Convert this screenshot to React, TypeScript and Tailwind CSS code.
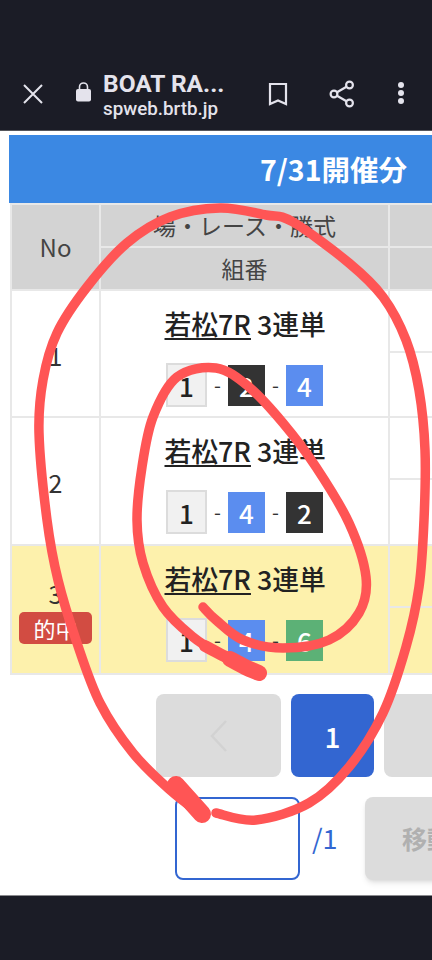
const jp = "font-['Noto_Sans_CJK_JP','Noto_Sans',sans-serif]";

// hand traced pen strokes, turned into a smooth curve
function smooth(pts: number[][]) {
  let d = `M${pts[0][0]} ${pts[0][1]}`;
  for (let i = 0; i < pts.length - 1; i++) {
    const p0 = pts[i - 1] || pts[i];
    const p1 = pts[i];
    const p2 = pts[i + 1];
    const p3 = pts[i + 2] || p2;
    const c1x = p1[0] + (p2[0] - p0[0]) / 6;
    const c1y = p1[1] + (p2[1] - p0[1]) / 6;
    const c2x = p2[0] - (p3[0] - p1[0]) / 6;
    const c2y = p2[1] - (p3[1] - p1[1]) / 6;
    d += ` C${c1x} ${c1y} ${c2x} ${c2y} ${p2[0]} ${p2[1]}`;
  }
  return d;
}

const outer = [
  [202, 815], [170, 790], [133, 753], [100, 703], [77, 643], [58, 580], [47, 520], [39, 433], [43, 380], [57, 333],
  [87, 287], [127, 243], [170, 217], [220, 208], [266, 215], [293, 222], [349, 263], [383, 297], [406, 340], [419, 390],
  [425, 450], [424, 520], [419, 587], [406, 647], [383, 713], [349, 767], [309, 803], [256, 820], [216, 813],
];
const inner = [
  [203, 607], [216, 620], [243, 640], [283, 648], [329, 640], [359, 613], [366, 577], [349, 523], [316, 467], [283, 423],
  [249, 387], [216, 368], [177, 377], [153, 417], [142, 467], [137, 520], [143, 563], [163, 607], [193, 637], [220, 654], [259, 673],
];

function Box({ n }: { n: number }) {
  if (n === 1) {
    return (
      <span className="flex h-[44px] w-[41px] items-center justify-center border-2 border-[#dcdcdc] bg-[#f1f1f1] text-[26px] font-medium text-[#222]">
        1
      </span>
    );
  }
  const bg = n === 2 ? "bg-[#333333]" : n === 4 ? "bg-[#5b8def]" : "bg-[#5cb176]";
  return (
    <span className={`flex h-[41px] w-[37px] items-center justify-center text-[26px] font-medium text-white ${bg}`}>
      {n}
    </span>
  );
}

function Row({ no, combo, hit, h }: { no: number; combo: number[]; hit?: boolean; h: string }) {
  const bg = hit ? "bg-[#fdf1ac]" : "bg-white";
  return (
    <div className={`flex border-b-2 border-[#e8e8e8] ${h} ${bg}`}>
      <div
        className={`flex w-[89px] shrink-0 flex-col items-center justify-center border-r-2 border-[#e8e8e8] text-[25px] leading-[38px] text-[#333] ${
          hit ? "pb-[2px]" : "pt-[2px]"
        }`}
      >
        {no}
        {hit && (
          <span className="w-[73px] rounded-[5px] bg-[#d24c42] text-center text-[22px] leading-[32px] text-white">
            的中
          </span>
        )}
      </div>
      <div className="flex w-[289px] shrink-0 flex-col items-center border-r-2 border-[#e8e8e8] pt-[13px]">
        <p className="w-[160px] whitespace-nowrap text-[26.8px] leading-[40px] font-medium text-[#222]">
          <span className="underline underline-offset-[3px]">若松7R</span> 3連単
        </p>
        <div className="mt-[19px] flex w-[157px] items-center justify-between text-[20px] text-[#333]">
          <Box n={combo[0]} />
          <span>-</span>
          <Box n={combo[1]} />
          <span>-</span>
          <Box n={combo[2]} />
        </div>
      </div>
      <div className="flex-1">
        <div className="h-[62px] border-b-2 border-[#e8e8e8]" />
      </div>
    </div>
  );
}

export default function App() {
  return (
    <div className={`relative flex h-[960px] w-[432px] flex-col overflow-hidden bg-white ${jp}`}>
      <header className="flex h-[131px] shrink-0 items-end border-b border-[#55565c] bg-[#1b1c26] pb-[9px] font-['Roboto',sans-serif] text-[#e4e3ec]">
        <svg className="mb-[17px] ml-[23px] h-[20px] w-[20px]" viewBox="0 0 20 20" fill="none" stroke="currentColor" strokeWidth="2">
          <path d="M1 1l18 18M19 1L1 19" />
        </svg>
        <svg className="mb-[19px] ml-[33px] h-[20px] w-[15px]" viewBox="0 0 15 20" fill="currentColor">
          <path d="M3.5 8V5a4 4 0 0 1 8 0v3" fill="none" stroke="currentColor" strokeWidth="1.6" />
          <rect y="7" width="15" height="12.5" rx="2" />
        </svg>
        <div className="ml-[12px] w-[150px]">
          <p className="text-[24.5px] leading-[27px] font-bold">BOAT RA...</p>
          <p className="text-[18.8px] leading-[24px] font-medium">spweb.brtb.jp</p>
        </div>
        <svg className="mb-[15px] ml-[15px] h-[24px] w-[20px]" viewBox="0 0 20 24" fill="none" stroke="currentColor" strokeWidth="2.2">
          <path d="M2 2h16v20l-8-3.5L2 22z" />
        </svg>
        <svg className="mb-[13px] ml-[41px] h-[28px] w-[26px]" viewBox="0 0 26 28" fill="none" stroke="currentColor" strokeWidth="2.2">
          <circle cx="20.5" cy="5" r="3.4" />
          <circle cx="5" cy="14" r="3.4" />
          <circle cx="20.5" cy="23" r="3.4" />
          <path d="M8 12.3l9.5-5.6M8 15.7l9.5 5.6" />
        </svg>
        <svg className="mb-[16px] ml-[43px] h-[24px] w-[6px]" viewBox="0 0 6 24" fill="currentColor">
          <circle cx="3" cy="4" r="3" />
          <circle cx="3" cy="12" r="3" />
          <circle cx="3" cy="20" r="3" />
        </svg>
      </header>

      <main className="flex-1 overflow-hidden pt-[4px]">
        <div className="ml-[9px] w-[700px]">
          <div className="flex h-[68px] items-center bg-[#3b88e3] pl-[251px] text-[28.5px] font-bold text-white">
            7/31開催分
          </div>
          <div className="ml-[1px] border-l-2 border-[#e8e8e8]">
            <div className="flex h-[88px] border-y-2 border-[#e8e8e8] bg-[#d3d3d3] text-[#444]">
              <div className="flex w-[89px] shrink-0 items-center justify-center border-r-2 border-[#e8e8e8] text-[24px]">
                No
              </div>
              <div className="flex w-[289px] shrink-0 flex-col border-r-2 border-[#e8e8e8] text-center text-[23px]">
                <div className="h-[43px] border-b-2 border-[#e8e8e8] leading-[41px]">場・レース・勝式</div>
                <div className="leading-[41px]">組番</div>
              </div>
              <div className="flex-1">
                <div className="h-[43px] border-b-2 border-[#e8e8e8]" />
              </div>
            </div>
            <Row no={1} combo={[1, 2, 4]} h="h-[127px]" />
            <Row no={2} combo={[1, 4, 2]} h="h-[128px]" />
            <Row no={3} combo={[1, 4, 6]} hit h="h-[129px]" />
          </div>
        </div>

        <div className="mt-[19px] flex w-[600px] gap-[10px] pl-[156px]">
          <div className="flex h-[83px] w-[125px] items-center justify-center rounded-[8px] bg-[#dcdcdc]">
            <svg className="h-[34px] w-[18px]" viewBox="0 0 18 34" fill="none" stroke="#d2d2d2" strokeWidth="2.5">
              <path d="M16 2L2 17l14 15" />
            </svg>
          </div>
          <div className="flex h-[83px] w-[83px] items-center justify-center rounded-[8px] bg-[#3366d1] text-[28px] font-medium text-white">
            1
          </div>
          <div className="h-[83px] w-[83px] rounded-[8px] bg-[#dcdcdc]" />
        </div>

        <div className="mt-[20px] flex w-[600px] items-center pl-[175px]">
          <div className="h-[83px] w-[125px] rounded-[8px] border-2 border-[#3366d1]" />
          <span className="ml-[12px] text-[27px] text-[#3366d1]">/1</span>
          <div className="ml-[27px] flex h-[83px] w-[125px] items-center justify-center rounded-[8px] bg-[#dcdcdc] text-[25px] font-bold text-[#b0b0b0] shadow-md">
            移動
          </div>
        </div>
      </main>

      <footer className="h-[65px] shrink-0 border-t border-[#8a8a8e] bg-[#1b1c26]" />

      {/* pen scribble drawn over the screenshot */}
      <svg className="absolute inset-0 h-[960px] w-[432px]" viewBox="0 0 432 960" fill="none" stroke="#ff5555" strokeLinecap="round" strokeLinejoin="round">
        <path d={smooth(outer)} strokeWidth="9.5" />
        <path d={smooth(inner)} strokeWidth="9.5" />
        <path d="M176 785L202 814" strokeWidth="18" />
        <path d={smooth([[205, 646], [220, 654], [238, 663]])} strokeWidth="12" />
        <path d={smooth([[230, 659], [245, 667], [259, 673]])} strokeWidth="16" />
      </svg>
    </div>
  );
}
